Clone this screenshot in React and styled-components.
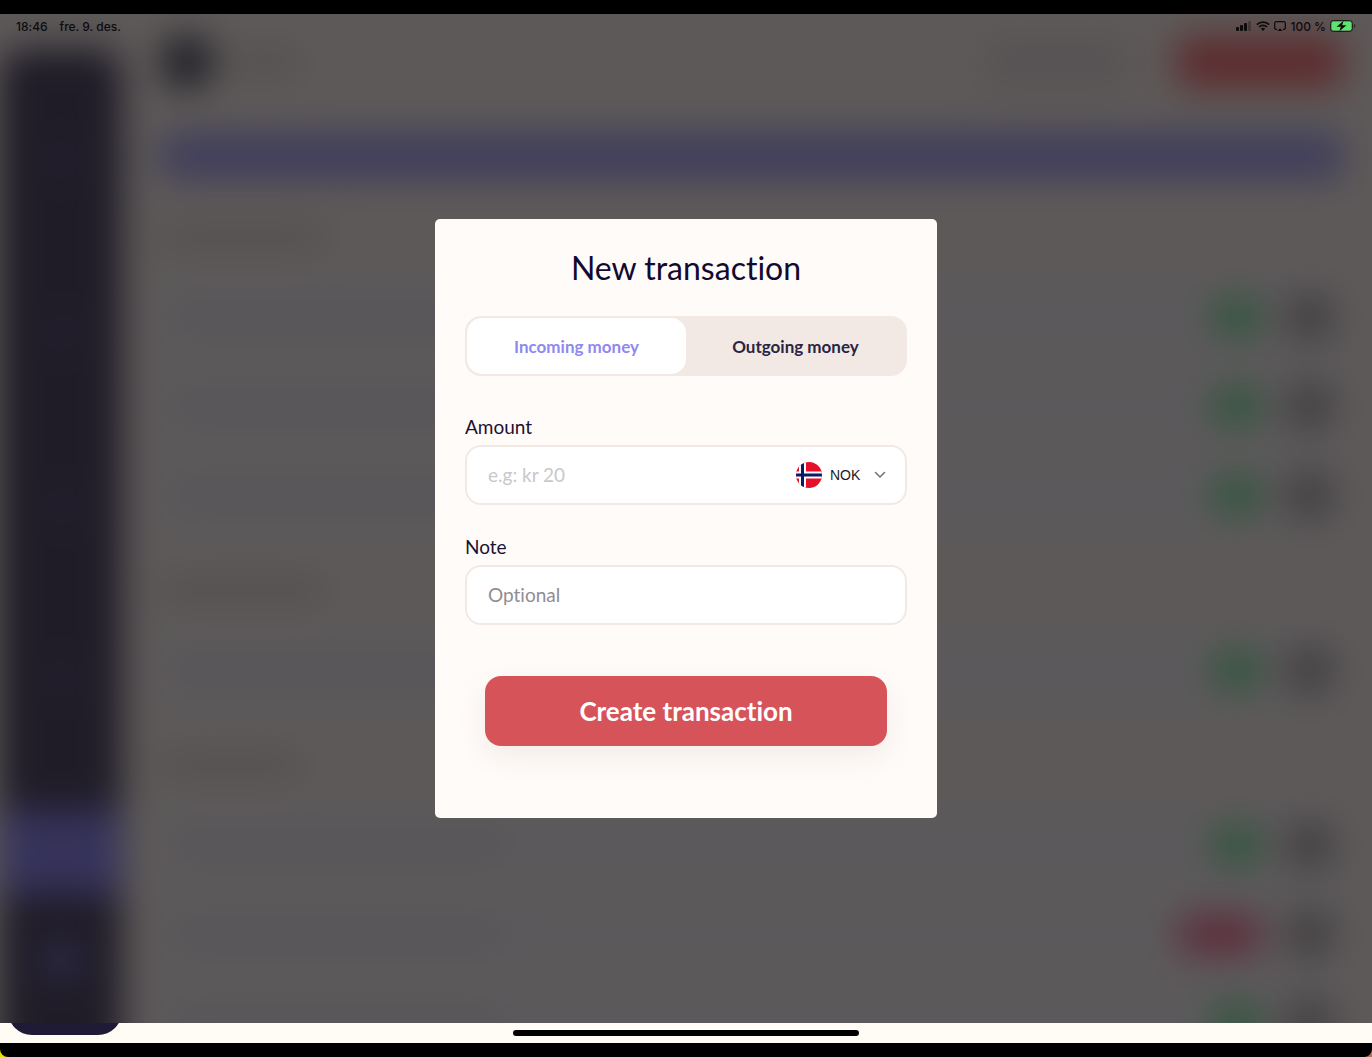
import { useState } from 'react';
import styled, { createGlobalStyle } from 'styled-components';

const v = {
  font: `Lato, "Open Sans", sans-serif`,
  fontSystem: `Inter, "Liberation Sans", sans-serif`,
  page: '#fffcf6',
  cream: '#fffbf8',
  sand: '#f2e9e5',
  ink: '#1a1233',
  navy: '#1f1a35',
  violet: '#8f88f0',
  red: '#d7535a',
};

const sections = [
  { id: 'first', title: 165, rows: ['in', 'in', 'in'] },
  { id: 'second', title: 165, rows: ['in'] },
  { id: 'third', title: 140, rows: ['in', 'out', 'in'] },
];

const navItems = ['home', 'cards', 'insights', 'people', 'money'];

const SignalIcon = () => (
  <svg width="16" height="10" viewBox="0 0 16 10" aria-hidden="true">
    <rect x="0" y="6" width="3" height="4" rx="1" />
    <rect x="4" y="4" width="3" height="6" rx="1" />
    <rect x="8" y="2" width="3" height="8" rx="1" />
    <rect x="12" y="0" width="3" height="10" rx="1" opacity="0.3" />
  </svg>
);

const WifiIcon = () => (
  <svg width="14" height="10" viewBox="0 0 14 10" aria-hidden="true">
    <g fill="none" stroke="currentColor" strokeWidth="1.7">
      <path d="M.8 3.6a8.8 8.8 0 0 1 12.4 0" />
      <path d="M3 6a5.7 5.7 0 0 1 8 0" />
    </g>
    <path d="M7 9.9 4.9 7.8a3 3 0 0 1 4.2 0z" />
  </svg>
);

const MirrorIcon = () => (
  <svg width="12" height="11" viewBox="0 0 12 11" aria-hidden="true">
    <path
      d="M3 8.4H2.2A1.5 1.5 0 0 1 .7 6.9V2.2A1.5 1.5 0 0 1 2.2.7h7.6a1.5 1.5 0 0 1 1.5 1.5v4.7a1.5 1.5 0 0 1-1.5 1.5H9"
      fill="none"
      stroke="currentColor"
      strokeWidth="1.2"
    />
    <path d="m6 7.200 2.500 2.800h-5z" />
  </svg>
);

const BatteryIcon = () => (
  <svg width="26" height="12" viewBox="0 0 26 12" aria-hidden="true">
    <rect x=".5" y=".5" width="22" height="11" rx="3" fill="none" stroke="#231f20" />
    <rect x="1.5" y="1.5" width="20" height="9" rx="2" fill="#5fe36f" />
    <path d="M13.6.8 6.6 6.7h4.2L9.4 11.2l7-5.9h-4.2z" />
    <path d="M24 4v4c.8-.3 1.3-1.1 1.3-2S24.800 4.300 24 4z" opacity="0.6" />
  </svg>
);

const NorwayFlag = () => (
  <svg width="26" height="26" viewBox="0 0 26 26" aria-hidden="true">
    <clipPath id="flag-circle">
      <circle cx="13" cy="13" r="13" />
    </clipPath>
    <g clipPath="url(#flag-circle)">
      <path fill="#e5102a" d="M0 0h26v26H0z" />
      <path fill="#fff" d="M3 0h7v26H3zM0 9.500h26v7H0z" />
      <path fill="#0a1c63" d="M5 0h3v26H5zM0 11.500h26v3H0z" />
    </g>
  </svg>
);

const ChevronIcon = () => (
  <svg width="12" height="8" viewBox="0 0 12 8" aria-hidden="true">
    <path d="m1.500 1.500 4.500 4.500 4.500-4.500" fill="none" stroke="#77757c" strokeWidth="1.6" strokeLinecap="round" strokeLinejoin="round" />
  </svg>
);

const Dashboard = () => (
  <Layout aria-hidden="true">
    <Sidebar>
      {navItems.map((item) => (
        <NavTile key={item} $active={item === 'money'} />
      ))}
      <NavTile $last />
    </Sidebar>
    <Main>
      <Header>
        <Avatar />
        <Line $width={70} />
        <GhostButton />
        <NewButton />
      </Header>
      <Banner />
      {sections.map((section) => (
        <Section key={section.id}>
          <Line $width={section.title} />
          <Rows>
            {section.rows.map((type, i) => (
              <Row key={i}>
                <Line $width={330} $light />
                <Pill $type={type} />
                <RoundButton />
              </Row>
            ))}
          </Rows>
        </Section>
      ))}
    </Main>
  </Layout>
);

const App = () => {
  const [direction, setDirection] = useState('in');
  const [amount, setAmount] = useState('');
  const [note, setNote] = useState('');

  return (
    <>
      <GlobalStyle />
      <Device>
        <Screen>
          <Backdrop>
            <Dashboard />

            <Overlay>
              <Modal role="dialog" aria-labelledby="modal-title" onSubmit={(e) => e.preventDefault()}>
                <Title id="modal-title">New transaction</Title>

                <Tabs>
                  <Tab type="button" $active={direction === 'in'} aria-pressed={direction === 'in'} onClick={() => setDirection('in')}>
                    Incoming money
                  </Tab>
                  <Tab type="button" $active={direction === 'out'} aria-pressed={direction === 'out'} onClick={() => setDirection('out')}>
                    Outgoing money
                  </Tab>
                </Tabs>

                <Fields>
                  <Field>
                    <Label htmlFor="amount">Amount</Label>
                    <InputBox>
                      <Input id="amount" $faint placeholder="e.g: kr 20" value={amount} onChange={(e) => setAmount(e.target.value)} />
                      <Currency>
                        <NorwayFlag />
                        <SelectWrap>
                          <Select aria-label="Currency" defaultValue="NOK">
                            <option>NOK</option>
                          </Select>
                          <ChevronIcon />
                        </SelectWrap>
                      </Currency>
                    </InputBox>
                  </Field>

                  <Field>
                    <Label htmlFor="note">Note</Label>
                    <InputBox>
                      <Input id="note" placeholder="Optional" value={note} onChange={(e) => setNote(e.target.value)} />
                    </InputBox>
                  </Field>
                </Fields>

                <Submit type="submit">Create transaction</Submit>
              </Modal>
            </Overlay>

            <StatusBar>
              <StatusGroup $gap={12}>
                <span>18:46</span>
                <span>fre. 9. des.</span>
              </StatusGroup>
              <StatusGroup $gap={4}>
                <SignalIcon />
                <WifiIcon />
                <MirrorIcon />
                <span>100 %</span>
                <BatteryIcon />
              </StatusGroup>
            </StatusBar>
          </Backdrop>

          <BottomStrip>
            <SidebarFoot />
            <HomeIndicator />
          </BottomStrip>
        </Screen>
      </Device>
    </>
  );
};

const GlobalStyle = createGlobalStyle`
  * {
    box-sizing: border-box;
  }

  body {
    margin: 0;
    background: linear-gradient(90deg, #e6e200, #b0745a);
    font-family: ${v.font};
    font-variant-ligatures: none;
    color: ${v.ink};
  }

  button, input, select {
    font-family: inherit;
    font-variant-ligatures: inherit;
    color: inherit;
  }
`;

const Device = styled.div`
  display: flex;
  height: 100vh;
  padding: 14px 0;
  background: #000;
  border-radius: 0 0 8px 8px;
`;

const Screen = styled.div`
  flex: 1;
  display: flex;
  flex-direction: column;
  min-width: 0;
  overflow: hidden;
  background: ${v.page};
`;

const Backdrop = styled.div`
  position: relative;
  flex: 1;
  display: flex;
  min-height: 0;
  overflow: hidden;
`;

/* runs on below the clipped edge so the blur does not fade out there */
const Layout = styled.div`
  flex: 1;
  display: flex;
  min-width: 0;
  margin-bottom: -60px;
  filter: blur(18px);
`;

const Sidebar = styled.div`
  flex: none;
  width: 122px;
  margin-top: 34px;
  padding-bottom: 81px;
  display: flex;
  flex-direction: column;
  justify-content: flex-end;
  gap: 89px;
  overflow: hidden;
  border-radius: 24px 24px 0 0;
  background: #1d1b42;
`;

const NavTile = styled.div`
  flex: none;
  height: 84px;
  margin-top: ${({ $last }) => ($last ? '-65px' : '0')};
  display: flex;
  align-items: center;
  justify-content: center;
  background: ${({ $active }) => ($active ? '#706eff' : 'transparent')};

  &::before {
    content: "";
    width: 30px;
    height: 30px;
    border-radius: 8px;
    background: ${({ $last }) => ($last ? '#6a6cf4' : '#2c2c62')};
    opacity: ${({ $active }) => ($active ? 0 : 1)};
  }
`;

const Main = styled.div`
  flex: 1;
  min-width: 0;
  padding: 24px 28px 0 38px;
  overflow: hidden;
`;

const Header = styled.div`
  display: flex;
  align-items: center;
  gap: 16px;
  height: 48px;
`;

const Avatar = styled.div`
  width: 54px;
  height: 54px;
  border-radius: 50%;
  background: #20253f;
`;

const Line = styled.div`
  width: ${({ $width }) => $width}px;
  height: 20px;
  border-radius: 6px;
  background: ${({ $light }) => ($light ? '#e9e6f0' : '#d8d0ca')};
`;

const GhostButton = styled.div`
  width: 144px;
  height: 48px;
  margin-left: auto;
  margin-right: 32px;
  border-radius: 14px;
  background: #e6e4e5;
`;

const NewButton = styled.div`
  width: 168px;
  height: 52px;
  border-radius: 14px;
  background: #ff5358;
`;

const Banner = styled.div`
  height: 48px;
  margin-top: 46px;
  border-radius: 14px;
  background: #9496ff;
`;

const Section = styled.div`
  margin-top: 47px;
`;

const Rows = styled.div`
  display: flex;
  flex-direction: column;
  gap: 13px;
  margin-top: 32px;
`;

const Row = styled.div`
  display: flex;
  align-items: center;
  height: 76px;
  padding: 0 12px;
  border-radius: 16px;
  background: #f8faff;
`;

const Pill = styled.div`
  width: ${({ $type }) => ($type === 'in' ? 48 : 82)}px;
  height: 38px;
  margin-left: auto;
  margin-right: 27px;
  border-radius: 12px;
  background: ${({ $type }) => ($type === 'in' ? '#5cf092' : '#ff5384')};
`;

const RoundButton = styled.div`
  width: 44px;
  height: 44px;
  border-radius: 12px;
  background: #9c999b;
`;

const Overlay = styled.div`
  position: absolute;
  inset: 0;
  display: flex;
  align-items: center;
  justify-content: center;
  background: rgba(33, 29, 30, 0.73);
`;

const Modal = styled.form`
  display: flex;
  flex-direction: column;
  width: 100%;
  max-width: 502px;
  padding: 29px 30px 72px;
  border-radius: 5px;
  background: ${v.cream};
`;

const Title = styled.h1`
  margin: 0 0 28px;
  font-size: 32px;
  line-height: 40px;
  font-weight: 400;
  text-align: center;
  color: #120a2e;
`;

const Tabs = styled.div`
  display: flex;
  height: 60px;
  padding: 2px;
  border-radius: 16px;
  background: ${v.sand};
`;

const Tab = styled.button`
  flex: 1;
  border: 0;
  border-radius: 15px;
  font-size: 17px;
  font-weight: 700;
  cursor: pointer;
  background: ${({ $active }) => ($active ? '#fff' : 'transparent')};
  color: ${({ $active }) => ($active ? v.violet : '#2b2440')};
`;

const Fields = styled.div`
  display: flex;
  flex-direction: column;
  gap: 30px;
  margin: 39px 0 51px;
`;

const Field = styled.div`
  display: flex;
  flex-direction: column;
  gap: 6px;
`;

const Label = styled.label`
  font-size: 19px;
  line-height: 24px;
`;

const InputBox = styled.div`
  display: flex;
  align-items: center;
  height: 60px;
  padding: 0 19px 0 21px;
  border: 2px solid ${v.sand};
  border-radius: 16px;
  background: #fff;
`;

const Input = styled.input`
  flex: 1;
  min-width: 0;
  padding: 0;
  border: 0;
  outline: none;
  background: transparent;
  font-size: 19px;
  line-height: 24px;

  &::placeholder {
    color: ${({ $faint }) => ($faint ? '#c9c7cc' : '#8f8d93')};
    opacity: 1;
  }
`;

const Currency = styled.div`
  display: flex;
  align-items: center;
  gap: 8px;
`;

const SelectWrap = styled.div`
  position: relative;
  display: flex;
  align-items: center;

  svg {
    position: absolute;
    right: 0;
    pointer-events: none;
  }
`;

const Select = styled.select`
  appearance: none;
  padding: 4px 25px 4px 0;
  border: 0;
  outline: none;
  background: transparent;
  font-family: "Liberation Sans", Arial, sans-serif;
  font-size: 14px;
  color: #1c1a22;
`;

const Submit = styled.button`
  height: 70px;
  margin: 0 20px;
  border: 0;
  border-radius: 16px;
  background: ${v.red};
  box-shadow: 0 10px 30px rgba(60, 40, 30, 0.07);
  font-size: 26px;
  font-weight: 700;
  color: #fff;
  cursor: pointer;
`;

const StatusBar = styled.div`
  position: absolute;
  top: 0;
  left: 0;
  right: 0;
  display: flex;
  align-items: center;
  justify-content: space-between;
  height: 24px;
  padding: 0 16px;
  font-family: ${v.fontSystem};
  font-size: 12px;
  font-weight: 500;
  color: #0d0b0c;
`;

const StatusGroup = styled.div`
  display: flex;
  align-items: center;
  gap: ${({ $gap }) => $gap}px;

  svg {
    fill: currentColor;
  }
`;

const BottomStrip = styled.div`
  position: relative;
  flex: none;
  height: 20px;
  overflow: hidden;
`;

const SidebarFoot = styled.div`
  width: 114px;
  height: 60px;
  margin: -48px 0 0 8px;
  border-radius: 24px;
  background: ${v.navy};
`;

const HomeIndicator = styled.div`
  position: absolute;
  left: 50%;
  bottom: 7px;
  width: 346px;
  height: 6px;
  border-radius: 3px;
  background: #000;
  transform: translateX(-50%);
`;

export default App;
